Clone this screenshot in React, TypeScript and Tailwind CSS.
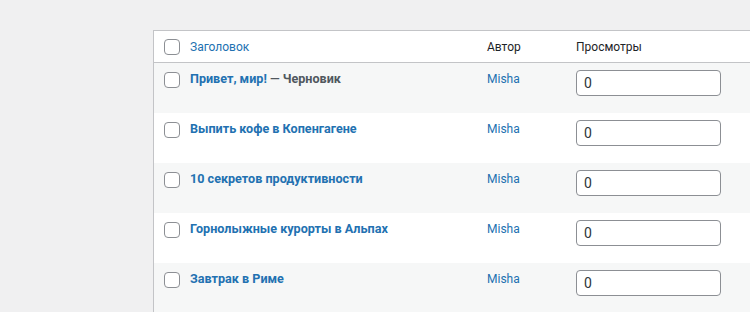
import React from 'react';

const posts = [
  { title: 'Привет, мир!', state: 'Черновик' },
  { title: 'Выпить кофе в Копенгагене' },
  { title: '10 секретов продуктивности' },
  { title: 'Горнолыжные курорты в Альпах' },
  { title: 'Завтрак в Риме' },
];

function Check() {
  return <span className="block h-4 w-4 rounded-[4px] border border-[#8c8f94] bg-white" />;
}

export default function App() {
  return (
    <div
      className="h-[312px] w-[750px] overflow-hidden bg-[#f0f0f1] pt-[30px] pl-[153px] text-[12px]"
      style={{ fontFamily: 'Roboto, "Noto Sans", sans-serif' }}
    >
      <div className="w-[640px] border border-[#c3c4c7] bg-white">
        {/* header */}
        <div className="flex h-[32px] items-center border-b border-[#c3c4c7]">
          <div className="flex w-[36px] justify-end pr-[10px]">
            <Check />
          </div>
          <div className="w-[287px] text-[#2271b1]">Заголовок</div>
          <div className="w-[89px] pl-[10px] text-[#1d2327]">Автор</div>
          <div className="pl-[10px] text-[#1d2327]">Просмотры</div>
        </div>
        {posts.map((p, i) => (
          <div
            key={p.title}
            className={
              'flex h-[50px] items-start pt-[8px] ' + (i % 2 === 0 ? 'bg-[#f6f7f7]' : 'bg-white')
            }
          >
            <div className="flex w-[36px] justify-end pt-[1px] pr-[10px]">
              <Check />
            </div>
            <div className="w-[287px] text-[12.6px] leading-[16px] font-bold text-[#2271b1]">
              {p.title}
              {p.state && <span className="text-[#50575e]"> — {p.state}</span>}
            </div>
            <div className="w-[89px] pl-[10px] leading-[16px] text-[#2271b1]">Misha</div>
            <div className="pl-[10px]">
              <div className="-mt-[1px] flex h-[26px] w-[145px] items-center rounded-[4px] border border-[#8c8f94] bg-white px-[7px] text-[14px] text-[#2c3338]">
                0
              </div>
            </div>
          </div>
        ))}
      </div>
    </div>
  );
}
